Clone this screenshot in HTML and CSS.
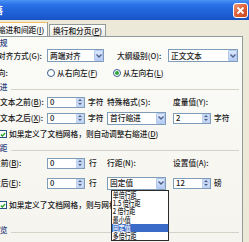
FILE: index.html
```html
<!DOCTYPE html>
<html>
<head>
<meta charset="utf-8">
<link rel="stylesheet" href="styles.css">
</head>
<body>
<div class="titlebar">
  <span class="title">段落</span>
  <span class="close"><svg width="9" height="9" viewBox="0 0 9 9"><path d="M1.5 1.5L7.5 7.5M7.5 1.5L1.5 7.5" stroke="#fff" stroke-width="1.8"/></svg></span>
</div>
<div class="tabs">
  <div class="tab active">缩进和间距(<u>I</u>)</div>
  <div class="tab">换行和分页(<u>P</u>)</div>
</div>
<div class="page">
  <div class="heading h-general"><span class="htext">常规</span></div>

  <div class="row r1">
    <span class="lbl l-align">对齐方式(G):</span>
    <span class="combo w-align"><span class="val">两端对齐</span><span class="arrow"><svg width="6" height="4" viewBox="0 0 6 4"><path d="M0.5 0.5L3 3L5.5 0.5" fill="none" stroke="#4d6185" stroke-width="1.3"/></svg></span></span>
    <span class="lbl l-outline">大纲级别(O):</span>
    <span class="combo w-outline"><span class="val">正文文本</span><span class="arrow"><svg width="6" height="4" viewBox="0 0 6 4"><path d="M0.5 0.5L3 3L5.5 0.5" fill="none" stroke="#4d6185" stroke-width="1.3"/></svg></span></span>
  </div>

  <div class="row r2">
    <span class="lbl l-dir">方向:</span>
    <span class="radio rad1"><span class="circle"></span>从右向左(<u>F</u>)</span>
    <span class="radio"><span class="circle on"></span>从左向右(<u>L</u>)</span>
  </div>

  <div class="heading h-indent"><span class="htext">缩进</span><span class="hline"></span></div>

  <div class="row r3">
    <span class="lbl l-std">文本之前(<u>B</u>):</span>
    <span class="spin"><span class="val">0</span><span class="spinbtn"><i class="up"></i><i class="dn"></i></span></span>
    <span class="unit">字符</span>
    <span class="lbl l-special">特殊格式(S):</span>
    <span class="lbl">度量值(Y):</span>
  </div>

  <div class="row r4">
    <span class="lbl l-std">文本之后(<u>X</u>):</span>
    <span class="spin"><span class="val">0</span><span class="spinbtn"><i class="up"></i><i class="dn"></i></span></span>
    <span class="unit">字符</span>
    <span class="combo w-mid"><span class="val">首行缩进</span><span class="arrow"><svg width="6" height="4" viewBox="0 0 6 4"><path d="M0.5 0.5L3 3L5.5 0.5" fill="none" stroke="#4d6185" stroke-width="1.3"/></svg></span></span>
    <span class="spin s-right"><span class="val">2</span><span class="spinbtn"><i class="up"></i><i class="dn"></i></span></span>
    <span class="unit u-right">字符</span>
  </div>

  <div class="row cb1">
    <span class="check"><svg width="7" height="7" viewBox="0 0 7 7"><path d="M1 3.5L2.8 5.3L6 1.6" fill="none" stroke="#21a121" stroke-width="1.5"/></svg></span>
    <span class="cbtext">如果定义了文档网格，则自动调整右缩进(<u>D</u>)</span>
  </div>

  <div class="heading h-space"><span class="htext">间距</span><span class="hline"></span></div>

  <div class="row r5">
    <span class="lbl l-sp">段前(<u>B</u>):</span>
    <span class="spin"><span class="val">0</span><span class="spinbtn"><i class="up"></i><i class="dn"></i></span></span>
    <span class="unit u-line">行</span>
    <span class="lbl l-linesp">行距(N):</span>
    <span class="lbl">设置值(A):</span>
  </div>

  <div class="row r6">
    <span class="lbl l-sp">段后(<u>E</u>):</span>
    <span class="spin"><span class="val">0</span><span class="spinbtn"><i class="up"></i><i class="dn"></i></span></span>
    <span class="unit u-line">行</span>
    <span class="combo w-mid"><span class="val">固定值</span><span class="arrow"><svg width="6" height="4" viewBox="0 0 6 4"><path d="M0.5 0.5L3 3L5.5 0.5" fill="none" stroke="#4d6185" stroke-width="1.3"/></svg></span></span>
    <span class="spin s-right"><span class="val">12</span><span class="spinbtn"><i class="up"></i><i class="dn"></i></span></span>
    <span class="unit u-right">磅</span>
  </div>

  <div class="row cb2">
    <span class="check"><svg width="7" height="7" viewBox="0 0 7 7"><path d="M1 3.5L2.8 5.3L6 1.6" fill="none" stroke="#21a121" stroke-width="1.5"/></svg></span>
    <span class="cbtext">如果定义了文档网格，则与网格对齐(<u>W</u>)</span>
  </div>

  <div class="heading h-preview"><span class="htext">预览</span><span class="hline"></span></div>

  <ul class="dropdown">
    <li>单倍行距</li>
    <li>1.5 倍行距</li>
    <li>2 倍行距</li>
    <li>最小值</li>
    <li class="sel">固定值</li>
    <li>多倍行距</li>
  </ul>
</div>
</body>
</html>
```
FILE: styles.css
```css
* { box-sizing: border-box; margin: 0; padding: 0; }
html, body { width: 249px; height: 242px; overflow: hidden; }
body {
  background: #ECE9D8;
  font-family: "Noto Sans CJK SC", "Noto Sans", sans-serif;
  font-size: 7.7px;
  font-weight: 500;
  line-height: 1;
  color: #1c1c1c;
}
u { text-decoration: underline; text-underline-offset: 1px; }

.titlebar {
  height: 20px;
  background: linear-gradient(#4a93f5 0%, #2a70e6 25%, #1f62d9 60%, #1a58cc 90%, #1550bd 100%);
  display: flex;
  align-items: center;
  justify-content: space-between;
  padding-right: 1px;
}
.title { color: #fff; font-size: 9px; font-weight: bold; margin-left: -15px; }
.close {
  width: 15px; height: 15px;
  border: 1px solid #fff;
  border-radius: 3px;
  background: linear-gradient(135deg, #f09a7a 0%, #e0643c 45%, #c8441c 100%);
  display: flex; align-items: center; justify-content: center;
}

.tabs { height: 16px; display: flex; align-items: flex-end; }
.tab {
  height: 12px;
  border: 1px solid #919B9C;
  border-bottom: none;
  background: linear-gradient(#fefefe, #ecebe5);
  display: flex; align-items: center; justify-content: center;
  width: 57px;
  margin-left: 1px;
  padding-top: 1px;
}
.tab.active {
  height: 15px;
  width: 58px;
  margin-left: -10px;
  background: #fcfcfb;
  border-top: 1px solid #f2c060;
  position: relative;
  top: 1px;
  padding-top: 0;
  padding-left: 4px;
}

.page {
  position: relative;
  width: 243px;
  height: 206px;
  overflow: hidden;
  border-top: 1px solid #919B9C;
  border-right: 1px solid #919B9C;
  background: linear-gradient(#fbfbf8, #f5f4ee);
}

.row { display: flex; align-items: center; height: 12px; white-space: nowrap; }
.heading { display: flex; align-items: center; height: 12px; white-space: nowrap; }
.htext { color: #27407d; margin-left: -8px; }
.hline { flex: 1; height: 1px; background: #d5d3c7; margin: 5px 3px 0 4px; }

.h-general { margin-top: 0; }
.r1 { margin-top: 0; height: 13px; }
.r2 { margin-top: 5px; }
.h-indent { margin-top: 2px; }
.r3 { margin-top: 3px; }
.r4 { margin-top: 4px; }
.cb1 { margin-top: 4px; }
.h-space { margin-top: 2px; }
.r5 { margin-top: 3px; }
.r6 { margin-top: 8px; }
.cb2 { margin-top: 10px; }
.h-preview { margin-top: 13px; }

.lbl { display: inline-block; }
.l-align { margin-left: -2px; width: 49px; }
.l-outline { margin-left: 13px; width: 51px; }
.l-dir { margin-left: -10px; width: 57px; }
.l-std { width: 47px; }
.l-special { width: 66px; }
.l-sp { margin-left: -7px; width: 54px; }
.l-linesp { width: 66px; }

.combo {
  height: 13px;
  border: 1px solid #7F9DB9;
  background: #fff;
  display: flex; align-items: center; justify-content: space-between;
  padding-left: 2px;
}
.combo .arrow {
  width: 9px; height: 11px;
  background: linear-gradient(#dce8fd, #b6cdf6);
  border: 1px solid #b2c6ee;
  border-radius: 1px;
  display: flex; align-items: center; justify-content: center;
}
.w-align { width: 57px; }
.w-outline { width: 70px; }
.w-mid { width: 59px; }

.spin {
  width: 38px; height: 11px;
  border: 1px solid #7F9DB9;
  background: #fff;
  display: flex; align-items: center; justify-content: space-between;
  padding-left: 2px;
}
.s-right { margin-left: 7px; }
.spinbtn {
  width: 8px; height: 9px;
  display: flex; flex-direction: column;
}
.spinbtn i {
  flex: 1;
  background: linear-gradient(#dce8fd, #bcd1f7);
  border: 1px solid #c2d3f2;
  display: flex; align-items: center; justify-content: center;
}
.spinbtn i::after {
  content: "";
  border-left: 2px solid transparent;
  border-right: 2px solid transparent;
}
.spinbtn .up::after { border-bottom: 2px solid #4d6185; }
.spinbtn .dn::after { border-top: 2px solid #4d6185; }

.unit { width: 22px; padding-left: 3px; }
.u-line { padding-left: 4px; }
.u-right { padding-left: 3px; }

.radio { display: flex; align-items: center; }
.rad1 { width: 66px; }
.circle {
  width: 8px; height: 8px;
  border: 1px solid #3a5d8f;
  border-radius: 50%;
  background: #fff;
  margin-right: 2px;
  display: flex; align-items: center; justify-content: center;
}
.circle.on::after {
  content: "";
  width: 4px; height: 4px; border-radius: 50%;
  background: #2fa83a;
}

.check {
  width: 8px; height: 8px;
  border: 1px solid #2a4f82;
  background: #fff;
  margin-left: -1px;
  margin-right: 2px;
  display: flex; align-items: center; justify-content: center;
}
.cbtext { display: inline-block; }

.dropdown {
  position: absolute;
  left: 111px; top: 153px;
  width: 58px; height: 51px;
  list-style: none;
  background: #fff;
  border: 1px solid #2b2b2b;
}
.dropdown li {
  height: 8.2px;
  line-height: 8.2px;
  font-size: 7.6px;
  padding-left: 1px;
  transform: scaleX(0.78);
  transform-origin: left center;
  width: 128.3%;
}
.dropdown li.sel { background: #3a6bc8; color: #fff; }
```
